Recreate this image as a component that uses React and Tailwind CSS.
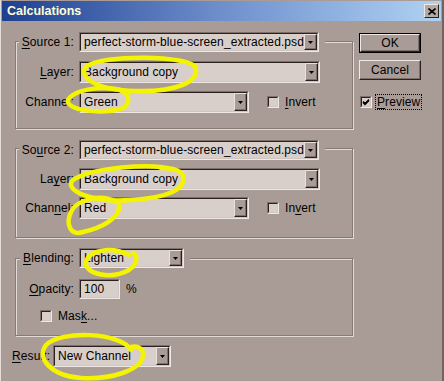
import React from "react";

const BG = "bg-[#a99c96]";

function DropBtn() {
  return (
    <div className="self-stretch w-[13px] shrink-0 bg-[#a99c96] border border-t-[#e8e1dc] border-l-[#e8e1dc] border-b-[#2a211e] border-r-[#2a211e] shadow-[inset_-1px_-1px_0_#7d706a] flex items-center justify-center">
      <svg width="5" height="3" viewBox="0 0 5 3"><polygon points="0,0 5,0 2.5,3" fill="#000" /></svg>
    </div>
  );
}

function Field({ size, text, arrow }) {
  return (
    <div className={"flex border border-t-[#7d706a] border-l-[#7d706a] border-b-[#efe8e4] border-r-[#efe8e4] " + size}>
      <div className="flex-1 min-w-0 flex items-center border border-t-[#2a211e] border-l-[#2a211e] border-b-[#cfc6c1] border-r-[#cfc6c1] bg-[#d8cfca]">
        <span className="flex-1 min-w-0 overflow-hidden pl-[3px] whitespace-nowrap leading-[15px]">{text}</span>
        {arrow && <DropBtn />}
      </div>
    </div>
  );
}

function Check({ checked }) {
  return (
    <div className="w-[12px] h-[12px] border border-t-[#7d706a] border-l-[#7d706a] border-b-[#efe8e4] border-r-[#efe8e4]">
      <div className="w-full h-full border border-t-[#2a211e] border-l-[#2a211e] border-b-[#cfc6c1] border-r-[#cfc6c1] bg-[#d8cfca] flex items-center justify-center">
        {checked && (
          <svg width="8" height="8" viewBox="0 0 8 8"><path d="M1 3.5 L3 5.5 L7 1.5 M1 4.5 L3 6.5 L7 2.5" stroke="#000" strokeWidth="1.3" fill="none" /></svg>
        )}
      </div>
    </div>
  );
}

function Label({ children }) {
  return (
    <div className="w-[63px] flex justify-end shrink-0">
      <span className={"px-[3px] pr-[5px] leading-none " + BG}>{children}</span>
    </div>
  );
}

const U = ({ children }) => <span className="underline underline-offset-2">{children}</span>;

const groupCls = "border border-[#877a74] shadow-[inset_1px_1px_0_#e2dad5,1px_1px_0_#e2dad5]";

export default function App() {
  return (
    <div
      className={"relative w-[444px] h-[381px] overflow-hidden text-[12px] tracking-[0.1px] text-black border-l border-l-[#e4ddd8] border-r-2 border-r-[#6f645f] " + BG}
      style={{ fontFamily: '"Liberation Sans", Arial, sans-serif' }}
    >
      {/* Title bar */}
      <div className="mt-[1px] mx-[1px] h-[20px] flex items-center bg-gradient-to-r from-[#1f3f90] via-[#6f8fcc] to-[#b0d2f2]">
        <span className="pl-[5px] font-bold text-[12.5px] tracking-normal text-[#ffffd6] leading-none">Calculations</span>
        <div className="ml-auto mr-[2px] w-[15px] h-[14px] bg-[#b3a9a3] border border-t-[#efe8e4] border-l-[#efe8e4] border-b-[#2a211e] border-r-[#2a211e] flex items-center justify-center">
          <svg width="8" height="7" viewBox="0 0 8 7"><path d="M0.5 0.5 L7.5 6.5 M7.5 0.5 L0.5 6.5" stroke="#000" strokeWidth="1.6" /></svg>
        </div>
      </div>

      {/* Body */}
      <div className="flex">
        {/* Left column */}
        <div className="w-[342px] pl-[11px]">
          {/* Group 1 */}
          <div className={"ml-[3px] mt-[20px] w-[338px] pb-[15px] " + groupCls}>
            <div className="flex items-center h-[20px] -mt-[10px]">
              <Label><U>S</U>ource 1:</Label>
              <div className={"pr-[6px] " + BG}>
                <Field size="w-[240px] h-[20px]" text="perfect-storm-blue-screen_extracted.psd" arrow />
              </div>
            </div>
            <div className="flex items-center h-[22px] mt-[9px]">
              <Label><U>L</U>ayer:</Label>
              <Field size="w-[241px] h-[22px]" text="Background copy" arrow />
            </div>
            <div className="flex items-center h-[22px] mt-[8px]">
              <Label>Channel:</Label>
              <Field size="w-[170px] h-[22px]" text="Green" arrow />
              <div className="ml-[18px]"><Check /></div>
              <span className="ml-[6px] leading-none"><U>I</U>nvert</span>
            </div>
          </div>

          {/* Group 2 */}
          <div className={"ml-[3px] mt-[19px] w-[338px] pb-[18px] " + groupCls}>
            <div className="flex items-center h-[20px] -mt-[9px]">
              <Label>So<U>u</U>rce 2:</Label>
              <div className={"pr-[6px] " + BG}>
                <Field size="w-[240px] h-[20px]" text="perfect-storm-blue-screen_extracted.psd" arrow />
              </div>
            </div>
            <div className="flex items-center h-[22px] mt-[8px]">
              <Label>La<U>y</U>er:</Label>
              <Field size="w-[241px] h-[22px]" text="Background copy" arrow />
            </div>
            <div className="flex items-center h-[22px] mt-[7px]">
              <Label>Chan<U>n</U>el:</Label>
              <Field size="w-[170px] h-[22px]" text="Red" arrow />
              <div className="ml-[18px]"><Check /></div>
              <span className="ml-[6px] leading-none">In<U>v</U>ert</span>
            </div>
          </div>

          {/* Blending group */}
          <div className={"ml-[3px] mt-[20px] w-[338px] pb-[13px] " + groupCls}>
            <div className="flex items-center h-[20px] -mt-[11px]">
              <Label><U>B</U>lending:</Label>
              <div className={"pr-[6px] " + BG}>
                <Field size="w-[105px] h-[20px]" text="Lighten" arrow />
              </div>
            </div>
            <div className="flex items-center h-[20px] mt-[11px]">
              <Label><U>O</U>pacity:</Label>
              <Field size="w-[41px] h-[20px]" text="100" />
              <span className="ml-[6px] leading-none">%</span>
            </div>
            <div className="flex items-center h-[13px] mt-[10px]">
              <div className="ml-[24px]"><Check /></div>
              <span className="ml-[6px] leading-none">Mas<U>k</U>...</span>
            </div>
          </div>

          {/* Result */}
          <div className="flex items-center h-[22px] mt-[9px]">
            <span className="w-[41px] leading-none"><U>R</U>esult:</span>
            <Field size="w-[118px] h-[22px]" text="New Channel" arrow />
          </div>
        </div>

        {/* Right column */}
        <div className="ml-[16px] pt-[12px] w-[62px] flex flex-col">
          <div className="h-[20px] border border-black">
            <div className="w-full h-full border border-t-[#efe8e4] border-l-[#efe8e4] border-b-[#2a211e] border-r-[#2a211e] shadow-[inset_-1px_-1px_0_#7d706a] flex items-center justify-center leading-none">
              OK
            </div>
          </div>
          <div className="mt-[7px] h-[20px] border border-t-[#efe8e4] border-l-[#efe8e4] border-b-[#2a211e] border-r-[#2a211e] shadow-[inset_-1px_-1px_0_#7d706a] flex items-center justify-center leading-none">
            Cancel
          </div>
          <div className="mt-[15px] flex items-center h-[14px] pl-[1px]">
            <Check checked />
            <span className="ml-[4px] px-[1px] py-[1px] outline outline-1 outline-dotted outline-black leading-none"><U>P</U>review</span>
          </div>
        </div>
      </div>

      {/* Yellow highlight marks (overlay) */}
      <svg className="absolute inset-0 pointer-events-none" width="444" height="381" viewBox="0 0 444 381">
        <g fill="none" stroke="#f4f400" strokeWidth="4.5" strokeLinecap="round">
          <path d="M195 68 C190 55, 100 54, 85 67 C78 75, 90 90, 135 91 C175 92, 200 82, 194 66" />
          <path d="M120 90 C100 85, 72 90, 67 100 C64 110, 100 115, 122 108 C130 104, 130 92, 115 89" />
          <path d="M175 170 C150 162, 90 168, 72 180 C62 190, 90 203, 130 200 C165 198, 185 190, 182 176 C180 170, 170 168, 160 168" />
          <path d="M115 202 C100 193, 75 200, 70 212 C64 225, 70 236, 82 232 C100 228, 120 218, 118 205" />
          <path d="M128 255 C110 246, 88 250, 85 262 C83 274, 110 280, 128 270 C137 264, 137 255, 132 253" />
          <path d="M130 350 C120 332, 60 330, 45 345 C35 358, 50 376, 80 378 C110 380, 140 370, 142 356 C143 350, 138 345, 130 347" />
        </g>
      </svg>
    </div>
  );
}
